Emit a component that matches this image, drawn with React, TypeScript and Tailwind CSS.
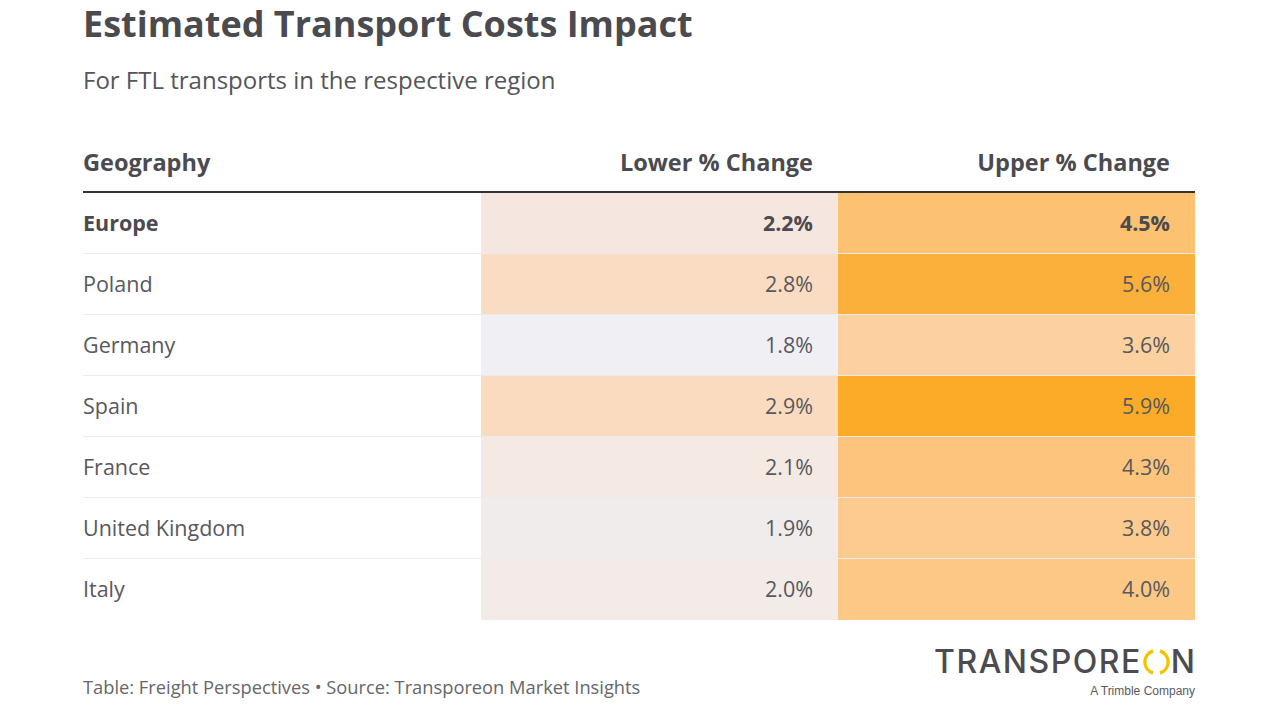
import React from "react";

type Row = {
  name: string;
  lower: string;
  upper: string;
  lowerBg: string;
  upperBg: string;
  bold?: boolean;
};

const rows: Row[] = [
  { name: "Europe", lower: "2.2%", upper: "4.5%", lowerBg: "bg-[#f5e7e0]", upperBg: "bg-[#fcc171]", bold: true },
  { name: "Poland", lower: "2.8%", upper: "5.6%", lowerBg: "bg-[#fadcc2]", upperBg: "bg-[#fbb03b]" },
  { name: "Germany", lower: "1.8%", upper: "3.6%", lowerBg: "bg-[#f0eff4]", upperBg: "bg-[#fdd09f]" },
  { name: "Spain", lower: "2.9%", upper: "5.9%", lowerBg: "bg-[#fadbbf]", upperBg: "bg-[#fbab28]" },
  { name: "France", lower: "2.1%", upper: "4.3%", lowerBg: "bg-[#f4e9e3]", upperBg: "bg-[#fcc47c]" },
  { name: "United Kingdom", lower: "1.9%", upper: "3.8%", lowerBg: "bg-[#f0ecec]", upperBg: "bg-[#fdca8f]" },
  { name: "Italy", lower: "2.0%", upper: "4.0%", lowerBg: "bg-[#f3ebe7]", upperBg: "bg-[#fcc885]" },
];

function Logo() {
  return (
    <div className="flex flex-col items-end">
      <div className="flex h-[32px] items-center font-['Inter',sans-serif] text-[32px] font-medium leading-none tracking-[1.5px] text-[#4b4b50]">
        <span>TRANSPORE</span>
        <svg width="27" height="26" viewBox="0 0 27 26" className="mx-[1px]">
          <path d="M10 2 A11.5 11.5 0 0 0 10 24" fill="none" stroke="#f2c400" strokeWidth="3.4" />
          <path d="M17 2 A11.5 11.5 0 0 1 17 24" fill="none" stroke="#f2c400" strokeWidth="3.4" />
        </svg>
        <span className="tracking-normal">N</span>
      </div>
      <div className="mt-[7px] font-['Liberation_Sans',Arial,sans-serif] text-[12px] leading-none text-[#5a5a5e]">
        A Trimble Company
      </div>
    </div>
  );
}

export default function App() {
  return (
    <div className="h-[720px] w-[1280px] overflow-hidden bg-white pl-[83px] font-['Open_Sans',sans-serif] text-[#505055]">
      <div className="w-[1112px]">
        <h1 className="text-[36px] font-bold leading-[48px] text-[#4a4a4f]">
          Estimated Transport Costs Impact
        </h1>
        <p className="mt-[17px] text-[24px] leading-[30px] text-[#55555a]">
          For FTL transports in the respective region
        </p>

        <div className="mt-[40px]">
          <div className="grid h-[58px] grid-cols-[398px_357px_357px] items-center border-b-2 border-[#333336] text-[23.5px] font-bold text-[#4a4a4f]">
            <div>Geography</div>
            <div className="pr-[25px] text-right">Lower % Change</div>
            <div className="pr-[25px] text-right">Upper % Change</div>
          </div>
          {rows.map((r, i) => (
            <div
              key={r.name}
              className={`grid h-[61px] grid-cols-[398px_357px_357px] text-[21.5px] ${
                i < rows.length - 1 ? "border-b border-black/[0.08]" : ""
              } ${r.bold ? "font-bold text-[#4a4a4f]" : "text-[#58585d]"}`}
            >
              <div className="flex items-center">{r.name}</div>
              <div className={`flex items-center justify-end pr-[25px] ${r.lowerBg}`}>{r.lower}</div>
              <div className={`flex items-center justify-end pr-[25px] ${r.upperBg}`}>{r.upper}</div>
            </div>
          ))}
        </div>

        <div className="mt-[26px] flex items-end justify-between">
          <div className="mb-[-3px] text-[18.3px] leading-[26px] text-[#66666b]">
            Table: Freight Perspectives • Source: Transporeon Market Insights
          </div>
          <Logo />
        </div>
      </div>
    </div>
  );
}
